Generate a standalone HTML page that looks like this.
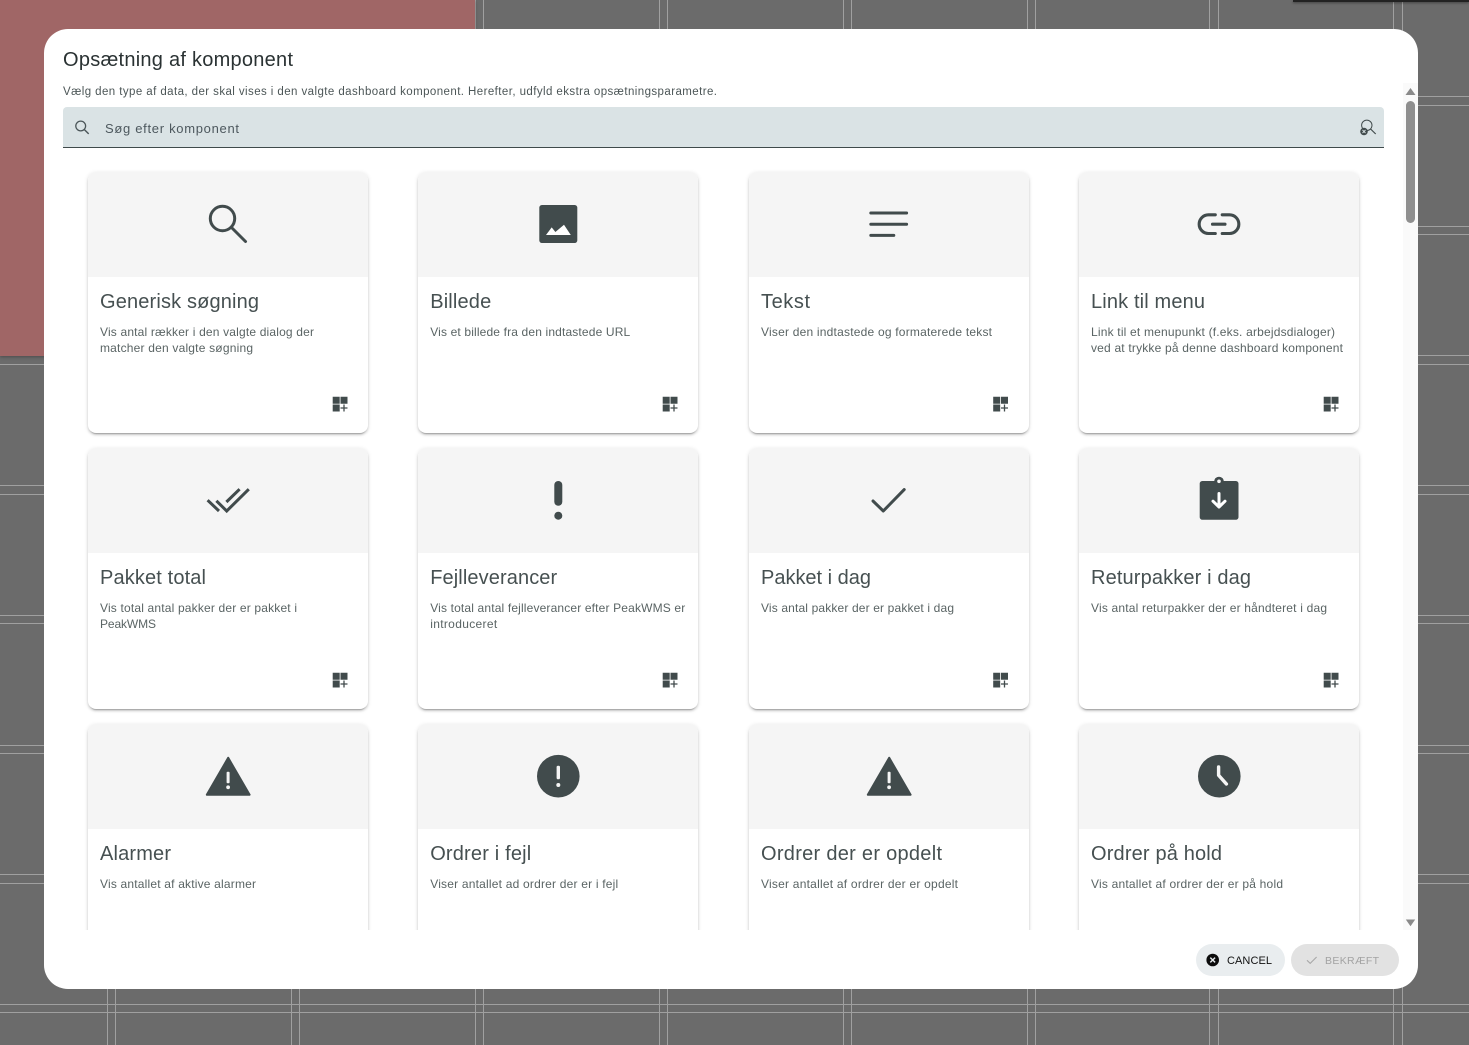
<!DOCTYPE html>
<html lang="da"><head><meta charset="utf-8"><title>Opsætning af komponent</title>
<style>
html,body{margin:0;padding:0;width:1469px;height:1045px;overflow:hidden;background:#6b6b6b;font-family:"Liberation Sans",sans-serif}
.bg{position:absolute;left:0;top:0}
.red{position:absolute;left:0;top:0;width:475px;height:356px;background:#a06666;box-shadow:0 1px 3px rgba(0,0,0,.3)}
.topbar{position:absolute;left:1293px;top:0;width:176px;height:2px;background:#222;box-shadow:0 1px 2px rgba(0,0,0,.4)}
.dialog{position:absolute;left:44px;top:29px;width:1374px;height:960px;background:#fff;border-radius:24px}
.abs{position:absolute;left:0;top:0;overflow:visible}
.search{position:absolute;left:63px;top:107px;width:1321px;height:40px;background:#dae3e5;border-bottom:1px solid #3f4a4b;border-radius:4px 4px 0 0}
.track{position:absolute;left:1403px;top:83px;width:15px;height:847px;background:#fafafa}
.thumb{position:absolute;left:1406px;top:101px;width:9px;height:122px;border-radius:5px;background:#8f8f8f}
.scroll{position:absolute;left:44px;top:148px;width:1359px;height:782px;overflow:hidden}
.card{position:absolute;width:280px;height:261px;background:#fff;border-radius:8px;overflow:hidden;box-shadow:0 3px 1px -2px rgba(0,0,0,.2),0 2px 2px 0 rgba(0,0,0,.14),0 1px 5px 0 rgba(0,0,0,.12)}
.head{position:absolute;left:0;top:0;width:100%;height:105px;background:#f5f5f5}
.card svg{position:absolute;left:0;top:0;overflow:visible}
.t{font-size:20px;fill:#465051}
.d{font-size:12px;fill:#5a6464}
.ic{fill:#414b4c}
.st{fill:none;stroke:#414b4c}
.btn{position:absolute;top:944px;height:32px;border-radius:16px}
</style></head>
<body>
<svg class="bg" width="1469" height="1045" fill="none" stroke="#a0a0a0" stroke-width="1">
<path d="M107.5 0V1045M115.5 0V1045M291.5 0V1045M299.5 0V1045M475.5 0V1045M483.5 0V1045M659.5 0V1045M667.5 0V1045M843.5 0V1045M851.5 0V1045M1027.5 0V1045M1035.5 0V1045M1209.5 0V1045M1218.5 0V1045M1393.5 0V1045M1402.5 0V1045"/>
<path d="M0 96.5H1469M0 105.5H1469M0 226.5H1469M0 234.5H1469M0 355.5H1469M0 364.5H1469M0 485.5H1469M0 494.5H1469M0 615.5H1469M0 623.5H1469M0 745.5H1469M0 753.5H1469M0 874.5H1469M0 883.5H1469M0 1004.5H1469M0 1012.5H1469"/>
</svg>
<div class="red"></div>
<div class="topbar"></div>
<div class="dialog"></div>

<div class="search"></div>
<svg class="abs" width="1469" height="1045">
<text x="63" y="66" font-size="20" fill="#2a3233" textLength="230">Opsætning af komponent</text>
<text x="63" y="95" font-size="11.5" fill="#4c5657" textLength="654">Vælg den type af data, der skal vises i den valgte dashboard komponent. Herefter, udfyld ekstra opsætningsparametre.</text>
<text x="105" y="133" font-size="13" fill="#4d585e" textLength="134">Søg efter komponent</text>
<circle cx="80.7" cy="126" r="4.9" fill="none" stroke="#4a5558" stroke-width="1.3"/>
<path d="M84.4 129.6L88.7 133.9" stroke="#4a5558" stroke-width="1.4" fill="none"/>
<circle cx="1366.8" cy="125.3" r="5.2" fill="none" stroke="#414b4c" stroke-width="1"/>
<path d="M1370.6 129L1375.7 134" stroke="#414b4c" stroke-width="1.2" fill="none"/>
<circle cx="1364" cy="131.5" r="3.8" fill="#414b4c"/>
<path d="M1362.5 130L1365.5 133M1365.5 130L1362.5 133" stroke="#dae3e5" stroke-width=".9"/>
</svg>

<div class="scroll">
<!-- row 1 -->
<div class="card" style="left:44px;top:24px"><div class="head"></div><svg width="281" height="261">
<g transform="translate(116,28)"><circle cx="18.5" cy="18.5" r="12.2" class="st" stroke-width="3"/><path d="M27.5 27.5L41.5 41.5" class="st" stroke-width="3" stroke-linecap="round"/></g>
<text x="12" y="136" class="t" textLength="159">Generisk søgning</text>
<text x="12" y="164" class="d" textLength="214">Vis antal rækker i den valgte dialog der</text>
<text x="12" y="180" class="d" textLength="153">matcher den valgte søgning</text>
<g transform="translate(244.7,224.7)"><path class="ic" d="M0 0h7v7H0zM7.8 0h7v7h-7zM0 7.8h7v7H0z"/><path d="M7.8 11.3h7M11.3 7.8v7" class="st" stroke-width="1.3"/></g>
</svg></div>

<div class="card" style="left:374.3px;top:24px"><div class="head"></div><svg width="281" height="261">
<g transform="translate(116,28)"><rect x="5.3" y="5" width="38" height="38" rx="2.6" class="ic"/><path fill="#fff" d="M12 35L17.7 27.4L21.4 32L30 24.8L36.8 35Z"/></g>
<text x="12.2" y="136" class="t" textLength="61">Billede</text>
<text x="12.2" y="164" class="d" textLength="200">Vis et billede fra den indtastede URL</text>
<g transform="translate(244.7,224.7)"><path class="ic" d="M0 0h7v7H0zM7.8 0h7v7h-7zM0 7.8h7v7H0z"/><path d="M7.8 11.3h7M11.3 7.8v7" class="st" stroke-width="1.3"/></g>
</svg></div>

<div class="card" style="left:704.7px;top:24px"><div class="head"></div><svg width="281" height="261">
<g transform="translate(116,28)"><path d="M5.8 13H41.6M5.8 24.3H41.6M5.8 35.4H28.8" class="st" stroke-width="3" stroke-linecap="round"/></g>
<text x="12" y="136" class="t" textLength="49">Tekst</text>
<text x="12" y="164" class="d" textLength="231">Viser den indtastede og formaterede tekst</text>
<g transform="translate(244.2,224.7)"><path class="ic" d="M0 0h7v7H0zM7.8 0h7v7h-7zM0 7.8h7v7H0z"/><path d="M7.8 11.3h7M11.3 7.8v7" class="st" stroke-width="1.3"/></g>
</svg></div>

<div class="card" style="left:1035px;top:24px"><div class="head"></div><svg width="281" height="261">
<g transform="translate(116,28)"><path d="M20.3 14.8H13.5a9.35 9.35 0 0 0 0 18.7H20.3M27.2 14.8H34.5a9.35 9.35 0 0 1 0 18.7H27.2M17.5 24.2H30" class="st" stroke-width="3.1" stroke-linecap="round"/></g>
<text x="12" y="136" class="t" textLength="114">Link til menu</text>
<text x="12" y="164" class="d" textLength="244">Link til et menupunkt (f.eks. arbejdsdialoger)</text>
<text x="12" y="180" class="d" textLength="252">ved at trykke på denne dashboard komponent</text>
<g transform="translate(244.7,224.7)"><path class="ic" d="M0 0h7v7H0zM7.8 0h7v7h-7zM0 7.8h7v7H0z"/><path d="M7.8 11.3h7M11.3 7.8v7" class="st" stroke-width="1.3"/></g>
</svg></div>

<!-- row 2 -->
<div class="card" style="left:44px;top:300px"><div class="head"></div><svg width="281" height="261">
<g transform="translate(116,28)"><path d="M3.6 24.2L15 35M12.4 24.8L22.7 35L44.8 13.2M22.4 26L35.6 13.2" class="st" stroke-width="3"/></g>
<text x="12" y="136" class="t" textLength="106">Pakket total</text>
<text x="12" y="164" class="d" textLength="197">Vis total antal pakker der er pakket i</text>
<text x="12" y="180" class="d" textLength="56">PeakWMS</text>
<g transform="translate(244.7,224.7)"><path class="ic" d="M0 0h7v7H0zM7.8 0h7v7h-7zM0 7.8h7v7H0z"/><path d="M7.8 11.3h7M11.3 7.8v7" class="st" stroke-width="1.3"/></g>
</svg></div>

<div class="card" style="left:374.3px;top:300px"><div class="head"></div><svg width="281" height="261">
<g transform="translate(116,28)"><rect x="20.3" y="5" width="8" height="24.8" rx="4" class="ic"/><circle cx="24.3" cy="39.7" r="4" class="ic"/></g>
<text x="12.2" y="136" class="t" textLength="127">Fejlleverancer</text>
<text x="12.2" y="164" class="d" textLength="255">Vis total antal fejlleverancer efter PeakWMS er</text>
<text x="12.2" y="180" class="d" textLength="67">introduceret</text>
<g transform="translate(244.7,224.7)"><path class="ic" d="M0 0h7v7H0zM7.8 0h7v7h-7zM0 7.8h7v7H0z"/><path d="M7.8 11.3h7M11.3 7.8v7" class="st" stroke-width="1.3"/></g>
</svg></div>

<div class="card" style="left:704.7px;top:300px"><div class="head"></div><svg width="281" height="261">
<g transform="translate(116,28)"><path d="M8 25L18.3 35L39.2 13.6" class="st" stroke-width="3" stroke-linecap="round" stroke-linejoin="round"/></g>
<text x="12" y="136" class="t" textLength="110">Pakket i dag</text>
<text x="12" y="164" class="d" textLength="193">Vis antal pakker der er pakket i dag</text>
<g transform="translate(244.2,224.7)"><path class="ic" d="M0 0h7v7H0zM7.8 0h7v7h-7zM0 7.8h7v7H0z"/><path d="M7.8 11.3h7M11.3 7.8v7" class="st" stroke-width="1.3"/></g>
</svg></div>

<div class="card" style="left:1035px;top:300px"><div class="head"></div><svg width="281" height="261">
<g transform="translate(116,28)"><rect x="4.7" y="5" width="38.8" height="38.7" rx="2.6" class="ic"/><circle cx="24" cy="5.6" r="4.9" class="ic"/><circle cx="24" cy="5.3" r="1.8" fill="#f5f5f5"/><path d="M24 17.5V30M18 25.2L24 31L30 25.2" fill="none" stroke="#fff" stroke-width="3" stroke-linecap="round" stroke-linejoin="round"/></g>
<text x="12" y="136" class="t" textLength="160">Returpakker i dag</text>
<text x="12" y="164" class="d" textLength="236">Vis antal returpakker der er håndteret i dag</text>
<g transform="translate(244.7,224.7)"><path class="ic" d="M0 0h7v7H0zM7.8 0h7v7h-7zM0 7.8h7v7H0z"/><path d="M7.8 11.3h7M11.3 7.8v7" class="st" stroke-width="1.3"/></g>
</svg></div>

<!-- row 3 -->
<div class="card" style="left:44px;top:576px"><div class="head"></div><svg width="281" height="261">
<g transform="translate(116,28)"><path class="ic" stroke="#414b4c" stroke-width="2" stroke-linejoin="round" d="M24.2 5.8L45.6 42.7H2.8Z"/><rect x="22.6" y="19.7" width="3" height="11.6" rx="1" fill="#f5f5f5"/><circle cx="24.1" cy="35.3" r="1.9" fill="#f5f5f5"/></g>
<text x="12" y="136" class="t" textLength="71">Alarmer</text>
<text x="12" y="164" class="d" textLength="156">Vis antallet af aktive alarmer</text>
</svg></div>

<div class="card" style="left:374.3px;top:576px"><div class="head"></div><svg width="281" height="261">
<g transform="translate(116,28)"><circle cx="24.3" cy="24.2" r="21.3" class="ic"/><rect x="22.6" y="13.7" width="3.4" height="13.6" rx="1.4" fill="#f5f5f5"/><circle cx="24.3" cy="33" r="2" fill="#f5f5f5"/></g>
<text x="12.2" y="136" class="t" textLength="101">Ordrer i fejl</text>
<text x="12.2" y="164" class="d" textLength="188">Viser antallet ad ordrer der er i fejl</text>
</svg></div>

<div class="card" style="left:704.7px;top:576px"><div class="head"></div><svg width="281" height="261">
<g transform="translate(116,28)"><path class="ic" stroke="#414b4c" stroke-width="2" stroke-linejoin="round" d="M24.2 5.8L45.6 42.7H2.8Z"/><rect x="22.6" y="19.7" width="3" height="11.6" rx="1" fill="#f5f5f5"/><circle cx="24.1" cy="35.3" r="1.9" fill="#f5f5f5"/></g>
<text x="12" y="136" class="t" textLength="181">Ordrer der er opdelt</text>
<text x="12" y="164" class="d" textLength="197">Viser antallet af ordrer der er opdelt</text>
</svg></div>

<div class="card" style="left:1035px;top:576px"><div class="head"></div><svg width="281" height="261">
<g transform="translate(116,28)"><circle cx="24.3" cy="24.2" r="21.3" class="ic"/><path d="M23.6 15V23.2L31.4 32" fill="none" stroke="#f5f5f5" stroke-width="3.4" stroke-linecap="round" stroke-linejoin="round"/></g>
<text x="12" y="136" class="t" textLength="131">Ordrer på hold</text>
<text x="12" y="164" class="d" textLength="192">Vis antallet af ordrer der er på hold</text>
</svg></div>
</div>

<div class="track"></div>
<div class="thumb"></div>
<svg class="abs" width="1469" height="1045">
<path d="M1410.5 88L1415.5 95H1405.5Z" fill="#8a8a8a"/>
<path d="M1405.8 919.5H1415.2L1410.5 926.3Z" fill="#8a8a8a"/>
</svg>

<div class="btn" style="left:1196px;width:89px;background:#e9edef"></div>
<div class="btn" style="left:1291px;width:108px;background:#e2e2e2"></div>
<svg class="abs" width="1469" height="1045">
<circle cx="1212.7" cy="960" r="6.3" fill="#0c0c0c"/>
<path d="M1210.3 957.6L1215.1 962.4M1215.1 957.6L1210.3 962.4" stroke="#e9edef" stroke-width="1.4"/>
<text x="1227" y="964" font-size="11" fill="#111" textLength="45">CANCEL</text>
<path d="M1307 960.3L1310.2 963.4L1316.6 957" fill="none" stroke="#a8a8a8" stroke-width="1.1"/>
<text x="1325" y="964" font-size="10.5" fill="#a3a3a3" textLength="54">BEKRÆFT</text>
</svg>
</body></html>
